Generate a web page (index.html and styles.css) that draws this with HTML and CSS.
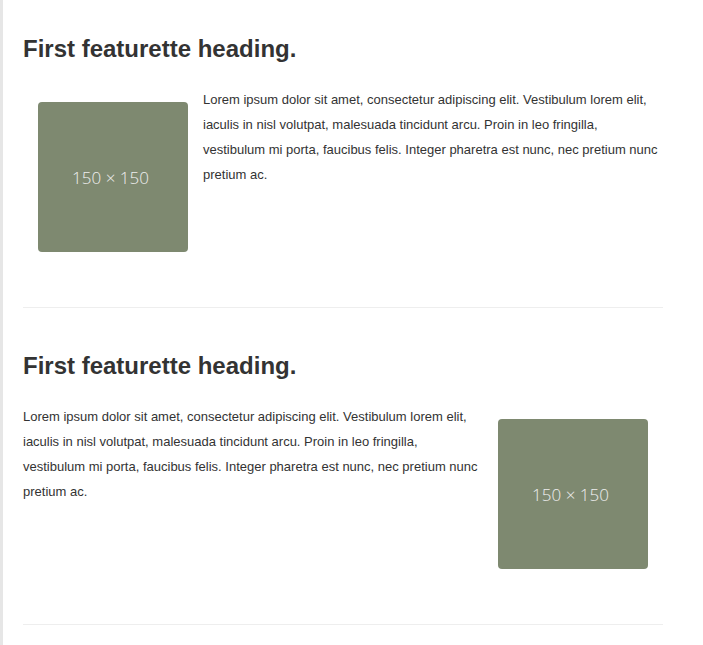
FILE: index.html
```html
<!DOCTYPE html>
<html>
<head>
<meta charset="utf-8">
<link rel="stylesheet" href="styles.css">
</head>
<body>
<div class="page">
  <div class="container">
    <section class="featurette featurette-first">
      <h2 class="featurette-heading">First featurette heading.</h2>
      <div class="featurette-body">
        <div class="placeholder">150 × 150</div>
        <p class="lead">Lorem ipsum dolor sit amet, consectetur adipiscing elit. Vestibulum lorem elit, iaculis in nisl volutpat, malesuada tincidunt arcu. Proin in leo fringilla, vestibulum mi porta, faucibus felis. Integer pharetra est nunc, nec pretium nunc pretium ac.</p>
      </div>
    </section>
    <hr class="divider">
    <section class="featurette">
      <h2 class="featurette-heading">First featurette heading.</h2>
      <div class="featurette-body">
        <p class="lead">Lorem ipsum dolor sit amet, consectetur adipiscing elit. Vestibulum lorem elit, iaculis in nisl volutpat, malesuada tincidunt arcu. Proin in leo fringilla, vestibulum mi porta, faucibus felis. Integer pharetra est nunc, nec pretium nunc pretium ac.</p>
        <div class="placeholder">150 × 150</div>
      </div>
    </section>
    <hr class="divider">
  </div>
</div>
</body>
</html>
```
FILE: styles.css
```css
html, body {
  margin: 0;
  padding: 0;
  background: #fff;
}
body {
  font-family: "Liberation Sans", Arial, sans-serif;
  color: #333;
}
.page {
  border-left: 3px solid #e6e6e6;
  min-height: 645px;
  box-sizing: border-box;
}
.container {
  width: 640px;
  margin-left: 20px;
  padding-top: 1px;
}
.featurette {
  padding-top: 45px;
}
.featurette-first {
  padding-top: 35px;
}
.featurette-heading {
  font-size: 24px;
  font-weight: bold;
  line-height: 26px;
  margin: 0;
}
.featurette-body {
  display: flex;
  align-items: flex-start;
  margin-top: 25px;
}
.placeholder {
  box-sizing: border-box;
  flex: 0 0 150px;
  width: 150px;
  height: 150px;
  margin: 15px 15px 0 15px;
  padding-right: 5px;
  background: #7e8970;
  border-radius: 4px;
  color: #eeeeee;
  font-family: "Open Sans", sans-serif;
  font-weight: 300;
  font-size: 17px;
  display: flex;
  align-items: center;
  justify-content: center;
}
.lead {
  flex: 1;
  margin: 0;
  font-size: 13px;
  line-height: 25px;
}
.divider {
  border: 0;
  border-top: 1px solid #eee;
  margin: 55px 0 0 0;
}
```
